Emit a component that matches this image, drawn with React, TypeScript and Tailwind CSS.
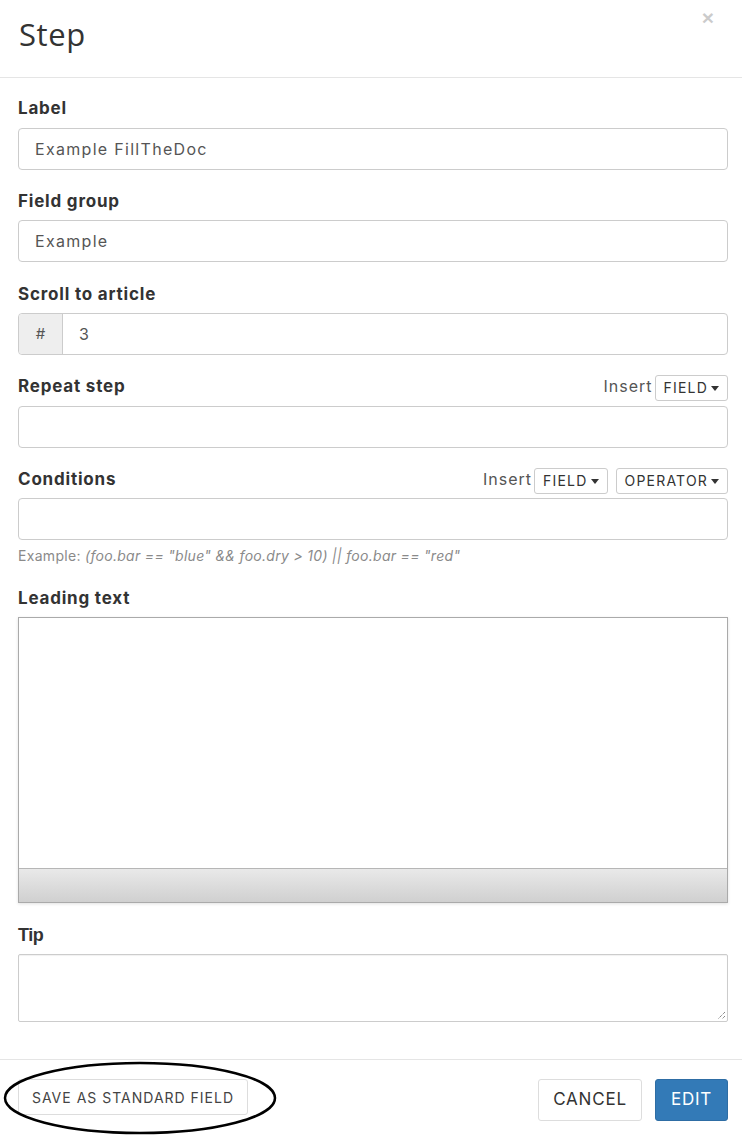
const font = "font-['Inter','Noto_Sans',sans-serif]";

const Caret = () => (
  <span className="ml-[3px] inline-block h-0 w-0 border-x-[4px] border-t-[5px] border-x-transparent border-t-[#333] align-middle" />
);

const DropButton = ({ label }: { label: string }) => (
  <button
    className={`-my-[3px] flex h-[26px] translate-y-[2px] items-center rounded-[3px] border border-[#ccc] bg-white px-[8px] text-[14px] leading-5 tracking-[1.2px] text-[#333] ${font}`}
  >
    {label}
    <Caret />
  </button>
);

const FieldLabel = ({ children }: { children: React.ReactNode }) => (
  <label className={`block text-[17px] leading-5 font-bold tracking-[0.8px] text-[#333] ${font}`}>{children}</label>
);

const TextInput = ({ value = "" }: { value?: string }) => (
  <div className="flex h-[42px] items-center rounded-[4px] border border-[#ccc] bg-white px-4 text-[16px] tracking-[1.3px] text-[#555]">
    {value}
  </div>
);

export default function App() {
  return (
    <div className={`relative min-h-[1136px] w-[742px] bg-white ${font}`}>
      <div className="flex h-[78px] items-start justify-between border-b border-[#e5e5e5] pl-[19px] pr-[28px]">
        <h4 className="mt-[16px] font-['Open_Sans',sans-serif] text-[31px] leading-9 font-normal tracking-[0.6px] text-[#333]">Step</h4>
        <span className="mt-[6px] font-['Liberation_Sans',sans-serif] text-[21px] leading-6 font-bold text-black opacity-20">×</span>
      </div>

      <div className="pl-[18px] pr-[14px] pt-5">
        <div className="mb-[10px]">
          <FieldLabel>Label</FieldLabel>
        </div>
        <TextInput value="Example FillTheDoc" />

        <div className="mt-[21px] mb-[9px]">
          <FieldLabel>Field group</FieldLabel>
        </div>
        <TextInput value="Example" />

        <div className="mt-[22px] mb-[9px]">
          <FieldLabel>Scroll to article</FieldLabel>
        </div>
        <div className="flex h-[42px] rounded-[4px] border border-[#ccc] bg-white text-[16px] text-[#555]">
          <span className="flex w-[44px] items-center justify-center rounded-l-[4px] border-r border-[#ccc] bg-[#eee] text-[15px]">#</span>
          <span className="flex items-center pl-4">3</span>
        </div>

        <div className="mt-[21px] mb-[10px] flex h-5 items-center justify-between">
          <FieldLabel>Repeat step</FieldLabel>
          <div className="flex h-5 items-center gap-[2px]">
            <span className="text-[16px] leading-5 tracking-[1px] text-[#555]">Insert</span>
            <DropButton label="FIELD" />
          </div>
        </div>
        <TextInput />

        <div className="mt-[21px] mb-[9px] flex h-5 items-center justify-between">
          <FieldLabel>Conditions</FieldLabel>
          <div className="flex h-5 items-center gap-[2px]">
            <span className="text-[16px] leading-5 tracking-[1px] text-[#555]">Insert</span>
            <DropButton label="FIELD" />
            <span className="w-[4px]" />
            <DropButton label="OPERATOR" />
          </div>
        </div>
        <TextInput />
        <p className="mt-[6px] text-[14px] leading-5 tracking-[0.3px] text-[#8a8a8a]">
          Example: <i>(foo.bar == "blue" &amp;&amp; foo.dry &gt; 10) || foo.bar == "red"</i>
        </p>

        <div className="mt-[22px] mb-[9px]">
          <FieldLabel>Leading text</FieldLabel>
        </div>
        <div className="flex h-[286px] flex-col border border-[#aaa] bg-white shadow-[0_1px_3px_rgba(0,0,0,0.12)]">
          <div className="flex-1" />
          <div className="h-[34px] border-t border-[#b6b6b6] bg-gradient-to-b from-[#e9e9e9] to-[#d0d0d0]" />
        </div>

        <div className="mt-[22px] mb-[9px]">
          <label className="block font-['Liberation_Sans',sans-serif] text-[18px] leading-5 font-bold tracking-[-0.5px] text-[#333]">Tip</label>
        </div>
        <div className="relative h-[68px] rounded-[2px] border border-[#ccc] bg-white shadow-[inset_0_1px_1px_rgba(0,0,0,0.06)]">
          <svg className="absolute right-[1px] bottom-[1px]" width="10" height="10" viewBox="0 0 10 10">
            <path d="M9 2 L2 9 M9 6 L6 9" stroke="#555" strokeWidth="1" strokeDasharray="1 1" />
          </svg>
        </div>
      </div>

      <div className="mt-[37px] flex items-start justify-between border-t border-[#e5e5e5] pl-[15px] pr-[14px] pt-[19px]">
        <button className="ml-[3px] h-[36px] w-[230px] rounded-[3px] border border-[#ddd] bg-white text-[14px] tracking-[1px] text-[#444]">
          SAVE AS STANDARD FIELD
        </button>
        <div className="flex gap-[13px]">
          <button className="h-[42px] w-[104px] rounded-[3px] border border-[#ddd] bg-white text-[17px] tracking-[0.8px] text-[#333]">CANCEL</button>
          <button className="h-[42px] w-[73px] rounded-[3px] border border-[#2e6da4] bg-[#337ab7] text-[17px] tracking-[0.8px] text-white">EDIT</button>
        </div>
      </div>

      <svg className="pointer-events-none absolute left-[3px] top-[1061px]" width="274" height="74" viewBox="0 0 274 74">
        <ellipse cx="137" cy="37" rx="135" ry="35" fill="none" stroke="#000" strokeWidth="2.5" />
      </svg>
    </div>
  );
}
